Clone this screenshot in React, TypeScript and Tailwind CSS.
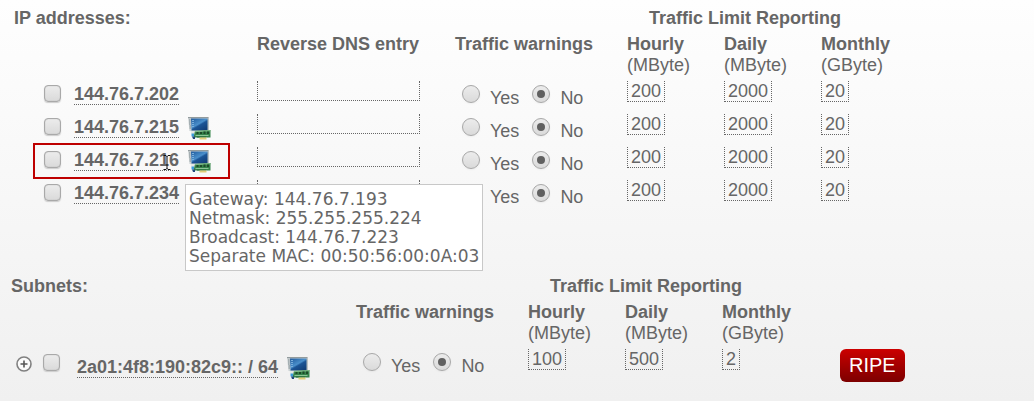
import { useState } from 'react';

type Limits = {
  hourly: string;
  daily: string;
  monthly: string;
};

type IpAddress = {
  ip: string;
  separateMac?: boolean;
  highlighted?: boolean;
  details?: string[];
  limits: Limits;
};

const defaultLimits: Limits = { hourly: '200', daily: '2000', monthly: '20' };

const addresses: IpAddress[] = [
  { ip: '144.76.7.202', limits: defaultLimits },
  { ip: '144.76.7.215', separateMac: true, limits: defaultLimits },
  {
    ip: '144.76.7.216',
    separateMac: true,
    highlighted: true,
    details: [
      'Gateway: 144.76.7.193',
      'Netmask: 255.255.255.224',
      'Broadcast: 144.76.7.223',
      'Separate MAC: 00:50:56:00:0A:03',
    ],
    limits: defaultLimits,
  },
  { ip: '144.76.7.234', limits: defaultLimits },
];

const subnet = {
  net: '2a01:4f8:190:82c9:: / 64',
  limits: { hourly: '100', daily: '500', monthly: '2' },
};

function NetworkCardIcon() {
  return (
    <svg width="23" height="23" viewBox="0 0 23 23" className="shrink-0" aria-hidden="true">
      <defs>
        <linearGradient id="screen" x1="0" y1="0" x2="0.8" y2="1">
          <stop offset="0" stopColor="#1f5a9c" />
          <stop offset="0.5" stopColor="#4a8fcb" />
          <stop offset="0.6" stopColor="#1c5596" />
          <stop offset="1" stopColor="#123f78" />
        </linearGradient>
      </defs>
      <path d="M0 0h20.5v14H1.500z" fill="#cbd2d4" />
      <path d="M0 0h20.5v1.200H0z" fill="#929b9d" />
      <path d="M19.500 1.200h1V14h-1z" fill="#9aa3a5" />
      <path d="M3 1.500h16.500v12H3.500z" fill="url(#screen)" />
      <path d="M1 3h1.500M1 5h1.500M1 7h1.500M1.500 9h1.500M1.500 11h1.500" stroke="#7f8b90" />
      <path d="M4 3.500h2M4 5.500h2M4 7.500h2M4 9.500h2" stroke="#79aedb" />
      <path d="M2.500 14h6v3.500h-5z" fill="#e4e9e6" />
      <path d="M7 14l15.500-1v7.500H5.500z" fill="#35834a" />
      <path d="M7 14l15.500-1v1.200L7 15.200z" fill="#7db885" />
      <path d="M8.500 15h2v2h-2zM12 15h2v2h-2zM15.500 14.500h2v2.500h-2zM19 14.500h2v2.500h-2z" fill="#1d4a2a" />
      <path d="M7.500 18.500h13" stroke="#8cc497" />
      <path d="M9 20h9" stroke="#2a6e3d" />
      <path d="M3.500 16.500h2.500v3H3.500z" fill="#3a9ad8" />
      <path d="M4 19.500h3v2.500H5z" fill="#20477a" />
      <path d="M11.500 20.500h7v2h-7z" fill="#e0cf78" />
    </svg>
  );
}

function TextCursor() {
  return (
    <svg width="8" height="16" viewBox="0 0 8 16" className="absolute left-[89px] top-2" aria-hidden="true">
      <path d="M0.500 0.500H3L4 1.500L5 0.500H7.500M4 1v13M0.500 14.500H3L4 13.500L5 14.500H7.500" fill="none" stroke="#111" />
    </svg>
  );
}

function CheckBox({ label }: { label: string }) {
  return (
    <input
      type="checkbox"
      aria-label={label}
      className="block size-[17px] shrink-0 appearance-none rounded-[4px] border border-[#a9a9a9] bg-linear-to-b from-[#ececec] to-[#dadada] shadow-[inset_0_0_1px_#999,0_1px_1px_#ccc] checked:bg-[#666]"
    />
  );
}

function WarningRadios({ name }: { name: string }) {
  const [value, setValue] = useState('No');

  return (
    <div className="flex gap-[13px] pl-[7px]">
      {['Yes', 'No'].map((option) => (
        <label key={option} className="flex gap-[10px]">
          <input
            type="radio"
            name={name}
            checked={value === option}
            onChange={() => setValue(option)}
            className="mt-1 grid size-[18px] appearance-none place-items-center rounded-full border border-[#a8a8a8] bg-linear-to-b from-[#ececec] to-[#dadada] shadow-xs checked:before:size-2 checked:before:rounded-full checked:before:bg-[#606060]"
          />
          <span className="pt-[7px]">{option}</span>
        </label>
      ))}
    </div>
  );
}

function LimitInput({ label, initial }: { label: string; initial: string }) {
  const [value, setValue] = useState(initial);

  return (
    <input
      aria-label={label}
      value={value}
      onChange={(e) => setValue(e.target.value)}
      className="block h-[21px] field-sizing-content border border-t-0 border-dotted border-[#666] px-[3px] leading-5"
    />
  );
}

function LimitCells({ name, limits }: { name: string; limits: Limits }) {
  return (
    <>
      <td>
        <LimitInput label={`${name} hourly limit`} initial={limits.hourly} />
      </td>
      <td>
        <LimitInput label={`${name} daily limit`} initial={limits.daily} />
      </td>
      <td>
        <LimitInput label={`${name} monthly limit`} initial={limits.monthly} />
      </td>
    </>
  );
}

function LimitHeadings() {
  return (
    <>
      <th>
        Hourly
        <span className="block font-normal">(MByte)</span>
      </th>
      <th>
        Daily
        <span className="block font-normal">(MByte)</span>
      </th>
      <th>
        Monthly
        <span className="block font-normal">(GByte)</span>
      </th>
    </>
  );
}

function AddressLink({ text }: { text: string }) {
  return (
    <a href="#" className="h-[21px] border-b border-dotted border-[#666] font-bold whitespace-nowrap">
      {text}
    </a>
  );
}

function AddressRow({ address }: { address: IpAddress }) {
  return (
    <tr className="h-[33px]">
      <td>
        <div className="flex justify-end pt-1 pr-[13px]">
          <CheckBox label={`Select ${address.ip}`} />
        </div>
      </td>
      <td>
        <div className="relative flex items-start gap-[9px] pt-[3px]">
          <AddressLink text={address.ip} />
          {address.separateMac ? <NetworkCardIcon /> : null}
          {address.highlighted ? (
            <>
              <span className="pointer-events-none absolute -top-1 -left-[41px] h-9 w-[197px] border-2 border-[#be0000]" />
              <TextCursor />
            </>
          ) : null}
          {address.details ? (
            <div
              role="tooltip"
              className="absolute top-[37px] left-[111px] z-10 border border-[#c8c8c8] bg-white px-[3px] pt-[5px] pb-1 font-['DejaVu_Sans',sans-serif] text-[17px] leading-[19px] whitespace-nowrap"
            >
              {address.details.map((line) => (
                <div key={line}>{line}</div>
              ))}
            </div>
          ) : null}
        </div>
      </td>
      <td>
        <input
          aria-label={`Reverse DNS entry for ${address.ip}`}
          className="block h-5 w-[163px] border border-t-0 border-dotted border-[#666] px-[3px]"
        />
      </td>
      <td>
        <WarningRadios name={address.ip} />
      </td>
      <LimitCells name={address.ip} limits={address.limits} />
    </tr>
  );
}

export default function App() {
  return (
    <main className="min-h-screen bg-linear-to-b from-[#fefefe] to-[#f0f0f0] pt-2 pb-4 font-['Liberation_Sans',Arial,sans-serif] text-lg leading-[21px] text-[#666] [&_td]:align-top [&_th]:text-left [&_th]:align-top">
      <table className="w-full table-fixed">
        <colgroup>
          <col className="w-[74px]" />
          <col className="w-[183px]" />
          <col className="w-[198px]" />
          <col className="w-[172px]" />
          <col className="w-[97px]" />
          <col className="w-[97px]" />
          <col />
        </colgroup>
        <thead>
          <tr className="h-[26px]">
            <th colSpan={4} className="pl-[14px]">
              IP addresses:
            </th>
            <th colSpan={3} className="pl-[22px]">
              Traffic Limit Reporting
            </th>
          </tr>
          <tr className="h-[47px]">
            <td colSpan={2} />
            <th>Reverse DNS entry</th>
            <th>Traffic warnings</th>
            <LimitHeadings />
          </tr>
        </thead>
        <tbody>
          {addresses.map((address) => (
            <AddressRow key={address.ip} address={address} />
          ))}
        </tbody>
      </table>

      <table className="mt-[63px] w-full table-fixed">
        <colgroup>
          <col className="w-[77px]" />
          <col className="w-[279px]" />
          <col className="w-[172px]" />
          <col className="w-[97px]" />
          <col className="w-[97px]" />
          <col className="w-[118px]" />
          <col />
        </colgroup>
        <thead>
          <tr className="h-[26px]">
            <th colSpan={3} className="pl-[11px]">
              Subnets:
            </th>
            <th colSpan={4} className="pl-[22px]">
              Traffic Limit Reporting
            </th>
          </tr>
          <tr className="h-[47px]">
            <td colSpan={2} />
            <th>Traffic warnings</th>
            <LimitHeadings />
            <td />
          </tr>
        </thead>
        <tbody>
          <tr className="h-[33px]">
            <td>
              <div className="flex items-start justify-end gap-[11px] pt-[5px] pr-[17px]">
                <button type="button" aria-label="Expand subnet" className="mt-[2px]">
                  <svg width="16" height="16" viewBox="0 0 16 16" className="block">
                    <circle cx="8" cy="8" r="7" fill="#fafafa" stroke="#808080" strokeWidth="1.600" />
                    <path d="M8 4.500v7M4.500 8h7" stroke="#555" strokeWidth="1.600" />
                  </svg>
                </button>
                <CheckBox label={`Select ${subnet.net}`} />
              </div>
            </td>
            <td>
              <div className="flex items-start gap-[9px] pt-2">
                <AddressLink text={subnet.net} />
                <NetworkCardIcon />
              </div>
            </td>
            <td>
              <WarningRadios name={subnet.net} />
            </td>
            <LimitCells name={subnet.net} limits={subnet.limits} />
            <td>
              <button
                type="button"
                className="block h-[33px] rounded-md bg-linear-to-b from-[#cc0000] to-[#7d0000] px-[9px] text-xl leading-[33px] text-white"
              >
                RIPE
              </button>
            </td>
          </tr>
        </tbody>
      </table>
    </main>
  );
}
